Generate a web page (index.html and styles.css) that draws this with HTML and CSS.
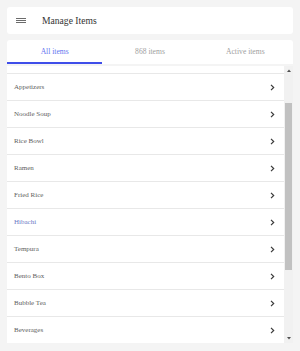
FILE: index.html
```html
<!DOCTYPE html>
<html lang="en">
<head>
    <meta charset="UTF-8">
    <meta name="viewport" content="width=device-width, initial-scale=1.0">
    <title>Manage Items</title>
    <link rel="stylesheet" href="styles.css">
</head>
<body>
    <header class="topbar">
        <span class="menu-icon">
            <svg width="10" height="6" viewBox="0 0 10 6"><path d="M0 0.5h10M0 2.5h10M0 4.5h10" stroke="#6b6b6b" stroke-width="1"/></svg>
        </span>
        <h1 class="title">Manage Items</h1>
    </header>

    <nav class="tabs">
        <a href="#" class="tab active">All items</a>
        <a href="#" class="tab">868 items</a>
        <a href="#" class="tab">Active items</a>
    </nav>

    <!-- category list + scrollbar -->
    <div class="list-panel">
        <ul class="item-list">
            <li class="item"><span>Appetizers</span><span class="chevron"><svg width="5" height="7" viewBox="0 0 5 7"><path d="M1 0.8l2.7 2.7-2.7 2.7" fill="none" stroke="#3a3a3a" stroke-width="1.2"/></svg></span></li>
            <li class="item"><span>Noodle Soup</span><span class="chevron"><svg width="5" height="7" viewBox="0 0 5 7"><path d="M1 0.8l2.7 2.7-2.7 2.7" fill="none" stroke="#3a3a3a" stroke-width="1.2"/></svg></span></li>
            <li class="item"><span>Rice Bowl</span><span class="chevron"><svg width="5" height="7" viewBox="0 0 5 7"><path d="M1 0.8l2.7 2.7-2.7 2.7" fill="none" stroke="#3a3a3a" stroke-width="1.2"/></svg></span></li>
            <li class="item"><span>Ramen</span><span class="chevron"><svg width="5" height="7" viewBox="0 0 5 7"><path d="M1 0.8l2.7 2.7-2.7 2.7" fill="none" stroke="#3a3a3a" stroke-width="1.2"/></svg></span></li>
            <li class="item"><span>Fried Rice</span><span class="chevron"><svg width="5" height="7" viewBox="0 0 5 7"><path d="M1 0.8l2.7 2.7-2.7 2.7" fill="none" stroke="#3a3a3a" stroke-width="1.2"/></svg></span></li>
            <li class="item selected"><span>Hibachi</span><span class="chevron"><svg width="5" height="7" viewBox="0 0 5 7"><path d="M1 0.8l2.7 2.7-2.7 2.7" fill="none" stroke="#3a3a3a" stroke-width="1.2"/></svg></span></li>
            <li class="item"><span>Tempura</span><span class="chevron"><svg width="5" height="7" viewBox="0 0 5 7"><path d="M1 0.8l2.7 2.7-2.7 2.7" fill="none" stroke="#3a3a3a" stroke-width="1.2"/></svg></span></li>
            <li class="item"><span>Bento Box</span><span class="chevron"><svg width="5" height="7" viewBox="0 0 5 7"><path d="M1 0.8l2.7 2.7-2.7 2.7" fill="none" stroke="#3a3a3a" stroke-width="1.2"/></svg></span></li>
            <li class="item"><span>Bubble Tea</span><span class="chevron"><svg width="5" height="7" viewBox="0 0 5 7"><path d="M1 0.8l2.7 2.7-2.7 2.7" fill="none" stroke="#3a3a3a" stroke-width="1.2"/></svg></span></li>
            <li class="item"><span>Beverages</span><span class="chevron"><svg width="5" height="7" viewBox="0 0 5 7"><path d="M1 0.8l2.7 2.7-2.7 2.7" fill="none" stroke="#3a3a3a" stroke-width="1.2"/></svg></span></li>
        </ul>
        <div class="scrollbar">
            <span class="arrow"><svg width="4" height="3" viewBox="0 0 4 3"><path d="M0 3L2 0.5 4 3z" fill="#505050"/></svg></span>
            <span class="thumb"></span>
            <span class="arrow arrow-down"><svg width="4" height="3" viewBox="0 0 4 3"><path d="M0 0L2 2.5 4 0z" fill="#505050"/></svg></span>
        </div>
    </div>
</body>
</html>
```

FILE: styles.css
```css
* {margin:0;padding:0;box-sizing:border-box;}
body {padding:7px;background:#f4f4f4;font-family:"Liberation Serif","Times New Roman",serif;}

/* top bar */
.topbar {height:27px;background:#fff;border-radius:3px;display:flex;align-items:center;padding-left:9px;}
.menu-icon {display:flex;width:10px;margin-right:16px;}
.title {font-size:9.6px;font-weight:normal;color:#333;}

/* tabs */
.tabs {display:flex;background:#fff;margin-top:6px;height:24px;border-radius:3px 3px 0 0;}
.tab {flex:1;text-align:center;font-size:7.6px;color:#a0a0a0;text-decoration:none;
      padding-top:2px;line-height:20px;border-bottom:2px solid transparent;}
.tab.active {color:#6374ef;border-bottom-color:#3f4ee9;}

/* list */
.list-panel {display:flex;height:277px;margin-top:2px;background:#fff;}
.item-list {flex:1;list-style:none;overflow:hidden;padding-top:7px;}
.item {height:27px;border-bottom:1px solid #e8e8e8;display:flex;align-items:center;
       justify-content:space-between;padding:0 9px 0 7px;font-size:7px;color:#5e5e5e;}
.item:first-child {height:28px;border-top:1px solid #e8e8e8;}
.item.selected {color:#6a78c6;}
.chevron {display:flex;}

/* scrollbar */
.scrollbar {width:9px;background:#f1f1f1;display:flex;flex-direction:column;align-items:center;}
.arrow {height:9px;display:flex;align-items:center;justify-content:center;}
.arrow-down {margin-top:auto;}
.thumb {width:7px;height:167px;margin-top:28px;background:#c1c1c1;}
```
